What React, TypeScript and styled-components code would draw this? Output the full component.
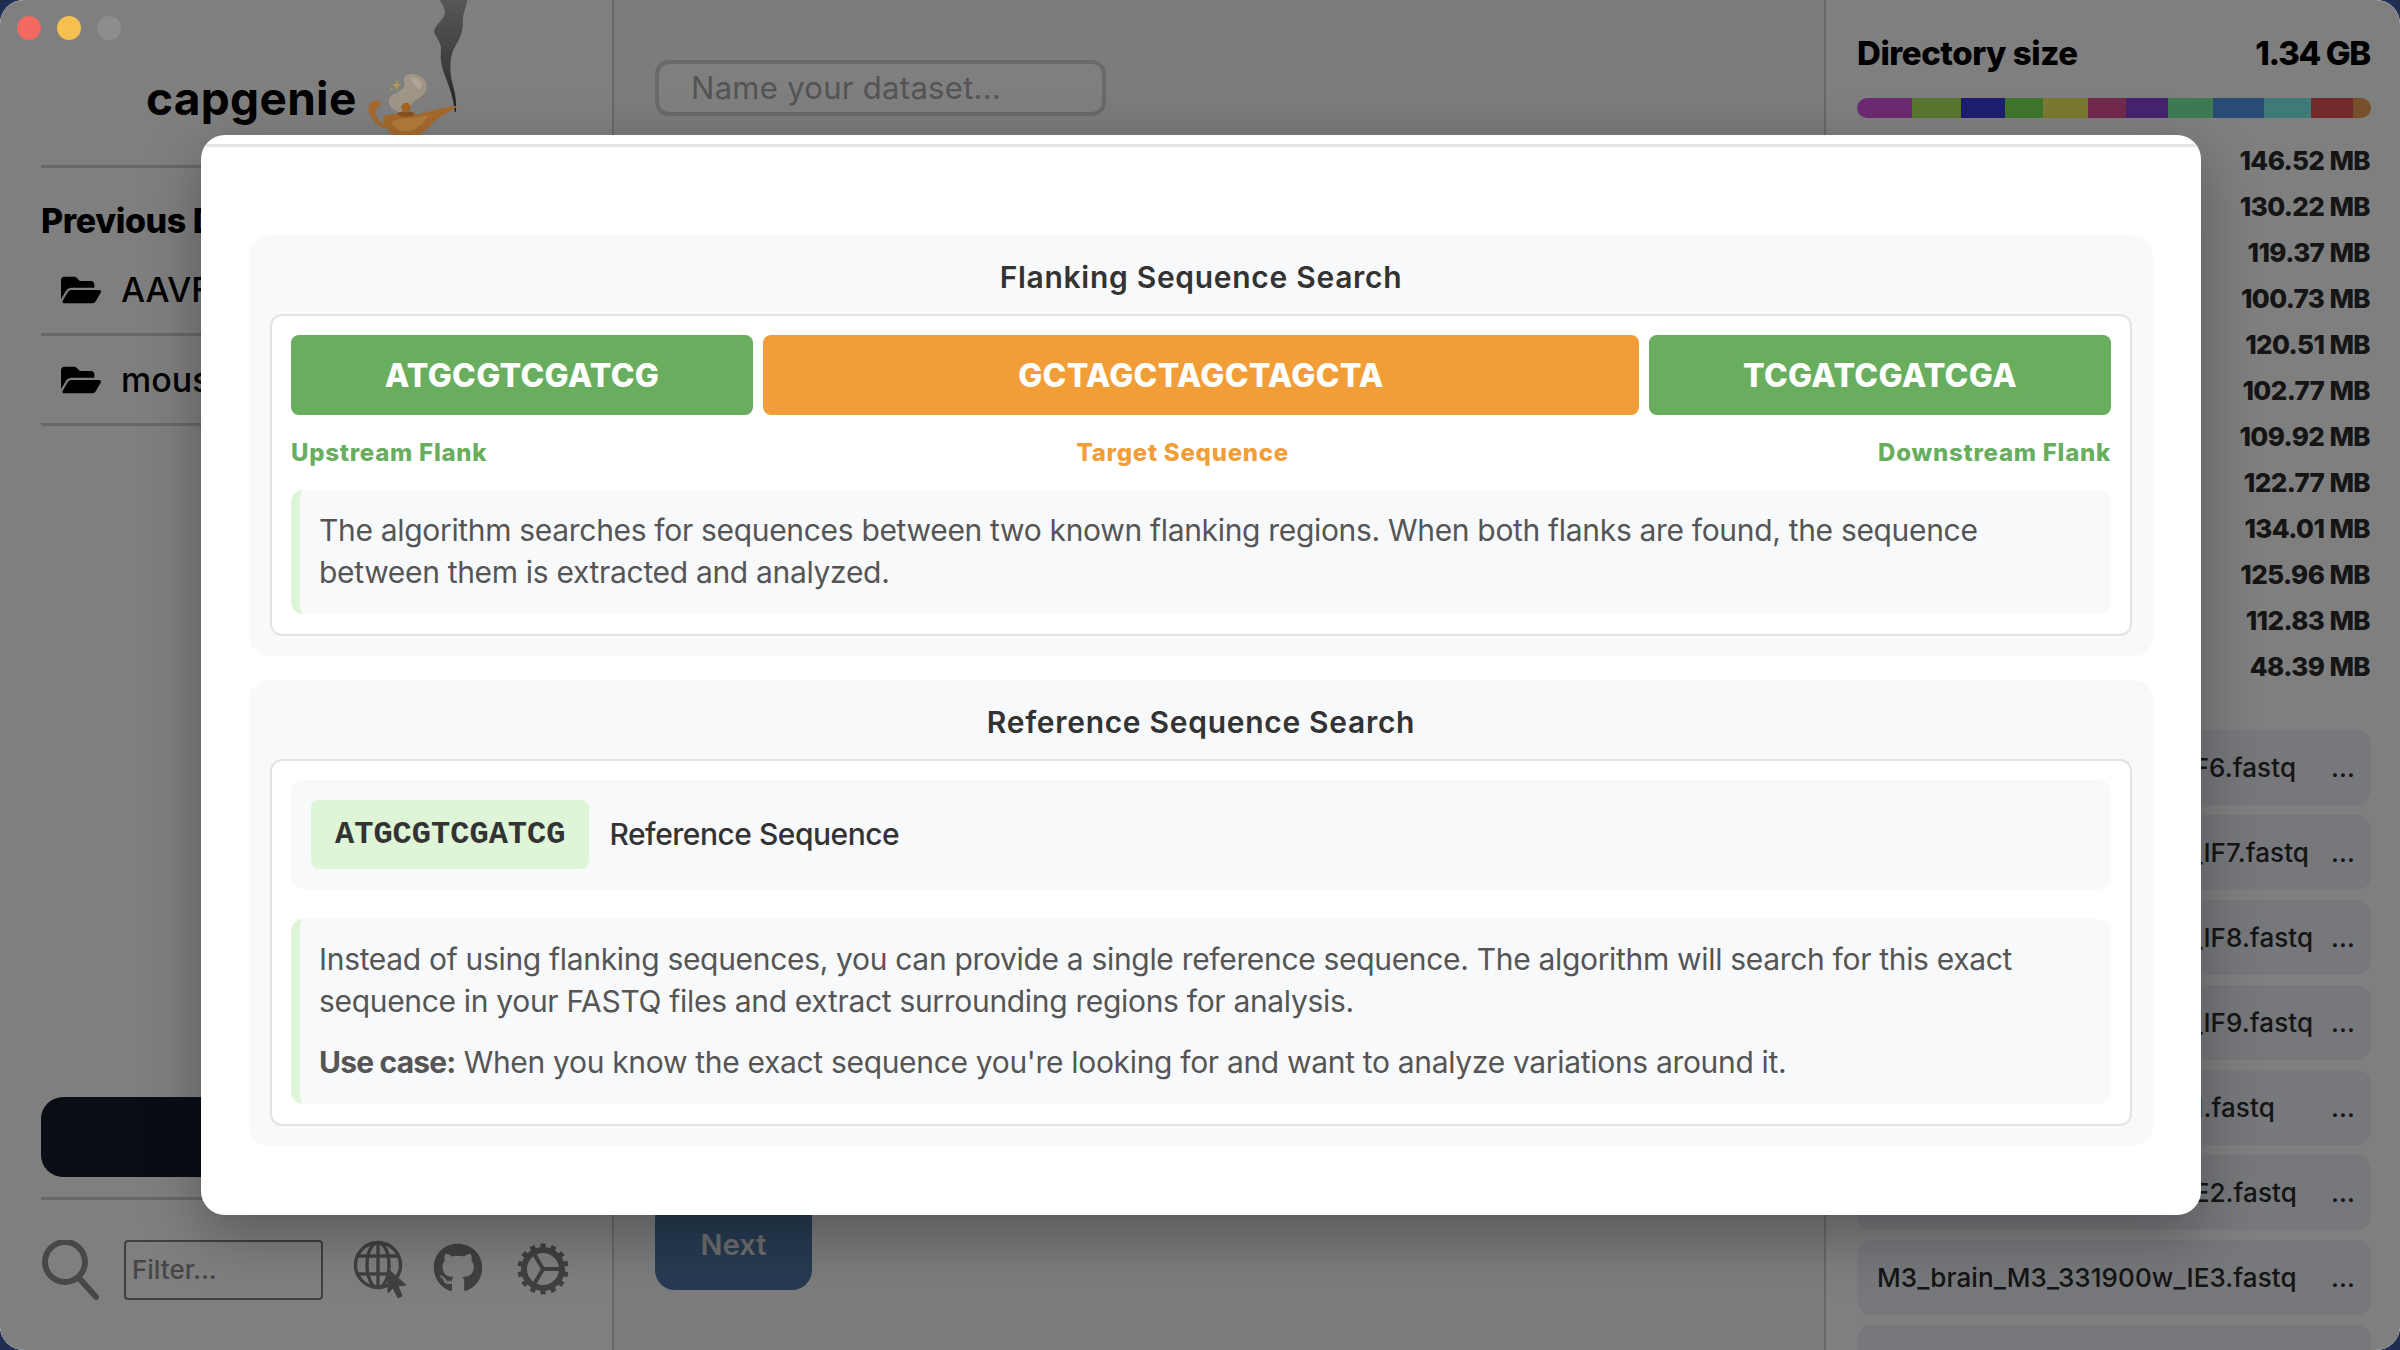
import React from 'react';
import styled, {createGlobalStyle} from 'styled-components';
import {FaFolderOpen, FaGithub} from 'react-icons/fa';

const FONT = `Inter, "Noto Sans", "Liberation Sans", sans-serif`;

const GlobalStyle = createGlobalStyle`
  html, body {
    margin: 0;
    padding: 0;
    background: #1f2e52;
  }

  * {
    box-sizing: border-box;
  }

  body {
    font-family: ${FONT};
  }
`;

const segments = [
    {color: '#dc54e6', width: 55},
    {color: '#b2f05e', width: 49},
    {color: '#3c3ce0', width: 44},
    {color: '#7cea58', width: 38},
    {color: '#f4f466', width: 45},
    {color: '#e4549a', width: 38},
    {color: '#8e46de', width: 42},
    {color: '#7ef4a4', width: 45},
    {color: '#5496ea', width: 51},
    {color: '#7cf4f4', width: 47},
    {color: '#e45454', width: 42},
    {color: '#eaa054', width: 18},
];

const sizes = ['146.52 MB', '130.22 MB', '119.37 MB', '100.73 MB', '120.51 MB', '102.77 MB', '109.92 MB', '122.77 MB', '134.01 MB', '125.96 MB', '112.83 MB', '48.39 MB'];

const files = [
    'M3_brain_M3_331900w_IF6.fastq',
    'M3_brain_M3_3319000w_IF7.fastq',
    'M3_brain_M3_3319000w_IF8.fastq',
    'M3_brain_M3_3319000w_IF9.fastq',
    'M3_brain_M3_33190w_IE1.fastq',
    'M3_brain_M3_331900w_IE2.fastq',
    'M3_brain_M3_331900w_IE3.fastq',
];

const LampLogo = () => (
    <LampSvg viewBox="0 0 420 405" width="140" height="135">
        <defs>
            <linearGradient id="smoke" x1="0" y1="0" x2="0" y2="1">
                <stop offset="0" stopColor="#565656"/>
                <stop offset="0.6" stopColor="#3d3d3d"/>
                <stop offset="1" stopColor="#1e1e1e"/>
            </linearGradient>
        </defs>
        <path fill="url(#smoke)"
              d="M270 0 C275 15 290 25 283 45 C275 65 250 80 253 95 C255 110 275 125 273 150 C270 180 275 205 290 240 C300 270 310 290 314 335 L318 335 C320 290 312 270 305 240 C298 200 300 165 315 140 C335 110 340 85 338 60 C340 40 350 15 352 0 Z"/>
        <path fill="#a09688"
              d="M170 225 C190 218 225 225 230 255 C232 285 205 295 190 305 C180 320 175 335 160 340 C130 335 110 315 118 295 C125 280 160 275 165 255 C160 240 160 230 170 225 Z"/>
        <path fill="#aea597" d="M185 232 C205 232 220 245 215 262 C205 275 195 255 185 245 Z"/>
        <path fill="#b89a4a" d="M140 240 L144 252 L155 255 L144 259 L140 270 L136 259 L125 255 L136 252 Z"/>
        <circle cx="125" cy="267" r="3" fill="#b89a4a"/>
        <path fill="#a56a2e"
              d="M62 310 C75 292 95 300 92 315 C85 322 75 325 78 345 C85 365 100 372 115 380 L105 385 C80 378 60 355 55 330 C55 320 58 314 62 310 Z"/>
        <path fill="#a56a2e"
              d="M100 350 C125 335 150 345 190 345 C225 340 270 322 322 317 C318 328 290 335 265 355 C240 378 225 395 210 405 L130 405 C115 395 100 375 100 350 Z"/>
        <path fill="#b47c3c" d="M125 365 C150 352 200 355 235 345 C225 370 195 395 165 395 C145 392 130 380 125 365 Z"/>
        <ellipse cx="168" cy="342" rx="26" ry="8" fill="#87521f"/>
        <circle cx="168" cy="322" r="14" fill="#a36526"/>
    </LampSvg>
);

const SearchIcon = () => (
    <svg viewBox="0 0 58 60" width="58" height="60" fill="none" stroke="#909090" strokeWidth="6" strokeLinecap="round">
        <circle cx="24" cy="22" r="20"/>
        <line x1="38" y1="38" x2="55" y2="57"/>
    </svg>
);

const GlobeIcon = () => (
    <svg viewBox="0 0 54 58" width="54" height="58" fill="none" stroke="#808080" strokeWidth="3.4">
        <circle cx="25" cy="25" r="22.5"/>
        <ellipse cx="25" cy="25" rx="11" ry="22.5"/>
        <line x1="25" y1="2" x2="25" y2="48"/>
        <line x1="4" y1="16" x2="46" y2="16"/>
        <line x1="4" y1="34" x2="34" y2="34"/>
        <path d="M35 29 L53 45 L45 46 L49 56 L45 58 L40 48 L35 53 Z" fill="#808080" stroke="#808080" strokeWidth="1"/>
    </svg>
);

const GearIcon = () => (
    <svg viewBox="0 0 52 52" width="52" height="52" fill="none" stroke="#808080">
        <circle cx="26" cy="26" r="19" strokeWidth="6"/>
        {Array.from({length: 14}).map((_, i) => (
            <rect key={i} x="23.4" y="0.5" width="5.2" height="6" fill="#808080" stroke="none"
                  transform={`rotate(${(360 / 14) * i} 26 26)`}/>
        ))}
        <path d="M26 26 L45 26 M26 26 L16 9 M26 26 L16 43" strokeWidth="4"/>
    </svg>
);

export default function App() {
    return (
        <Window>
            <GlobalStyle/>
            <TrafficLights>
                <Light $color="#f3685f"/>
                <Light $color="#f6c04f"/>
                <Light $color="#8d8d8d"/>
            </TrafficLights>

            <Sidebar>
                <LogoRow>
                    <LogoText>capgenie</LogoText>
                    <LampLogo/>
                </LogoRow>
                <SideHeading>Previous Datasets</SideHeading>
                <FolderRow><FaFolderOpen/><span>AAVF6</span></FolderRow>
                <FolderRow><FaFolderOpen/><span>mouse</span></FolderRow>
                <BottomGroup>
                    <DarkButton/>
                    <ToolRow>
                        <SearchIcon/>
                        <FilterBox>Filter...</FilterBox>
                        <GlobeIcon/>
                        <GithubWrap><FaGithub size={50}/></GithubWrap>
                        <GearWrap><GearIcon/></GearWrap>
                    </ToolRow>
                </BottomGroup>
            </Sidebar>

            <Main>
                <NameBox>Name your dataset...</NameBox>
                <NextButton>Next</NextButton>
            </Main>

            <RightPanel>
                <SizeHeader>
                    <span>Directory size</span>
                    <SizeTotal>1.34 GB</SizeTotal>
                </SizeHeader>
                <SizeBar>
                    {segments.map(s => <Segment key={s.color} $color={s.color} $width={s.width}/>)}
                </SizeBar>
                <SizeList>
                    {sizes.map(s => <SizeRow key={s}>{s}</SizeRow>)}
                </SizeList>
                <FileList>
                    {files.map(f => (
                        <FileRow key={f}>
                            <span>{f}</span>
                            <span>...</span>
                        </FileRow>
                    ))}
                    <FileRow/>
                </FileList>
            </RightPanel>

            <Overlay/>

            <ModalWrap>
                <Modal>
                    <ModalHeader/>
                    <ModalBody>
                        <Section>
                            <SectionTitle>Flanking Sequence Search</SectionTitle>
                            <Card>
                                <SeqBars>
                                    <SeqBar $color="#69ae5f">ATGCGTCGATCG</SeqBar>
                                    <SeqBar $color="#f29e38">GCTAGCTAGCTAGCTA</SeqBar>
                                    <SeqBar $color="#69ae5f">TCGATCGATCGA</SeqBar>
                                </SeqBars>
                                <SeqLabels>
                                    <SeqLabel $color="#69ae5f">Upstream Flank</SeqLabel>
                                    <SeqLabel $color="#f29e38">Target Sequence</SeqLabel>
                                    <SeqLabel $color="#69ae5f">Downstream Flank</SeqLabel>
                                </SeqLabels>
                                <Note>
                                    <p>The algorithm searches for sequences between two known flanking regions. When both flanks are found, the sequence<br/>between them is extracted and analyzed.</p>
                                </Note>
                            </Card>
                        </Section>

                        <Section>
                            <SectionTitle>Reference Sequence Search</SectionTitle>
                            <Card>
                                <RefRow>
                                    <RefPill>ATGCGTCGATCG</RefPill>
                                    <RefLabel>Reference Sequence</RefLabel>
                                </RefRow>
                                <RefNote>
                                    <p>Instead of using flanking sequences, you can provide a single reference sequence. The algorithm will search for this exact<br/>sequence in your FASTQ files and extract surrounding regions for analysis.</p>
                                    <p><strong>Use case:</strong> When you know the exact sequence you're looking for and want to analyze variations around it.</p>
                                </RefNote>
                            </Card>
                        </Section>
                    </ModalBody>
                </Modal>
            </ModalWrap>
        </Window>
    );
}

const Window = styled.div`
  position: relative;
  display: flex;
  width: 2400px;
  height: 1350px;
  overflow: hidden;
  border-radius: 24px;
  background: #fff;
`

const TrafficLights = styled.div`
  position: absolute;
  top: 16px;
  left: 17px;
  z-index: 6;
  display: flex;
  gap: 16px;
`

const Light = styled.div<{ $color: string }>`
  width: 24px;
  height: 24px;
  border-radius: 50%;
  background: ${props => props.$color};
`

const Sidebar = styled.aside`
  display: flex;
  flex-direction: column;
  flex: 0 0 614px;
  height: 100%;
  padding: 0 41px 50px;
  border-right: 2px solid #d0d0d0;
  background: #fff;
`

const LogoRow = styled.div`
  display: flex;
  align-items: flex-start;
  height: 168px;
  padding-left: 105px;
  border-bottom: 3px solid #d0d0d0;
`

const LogoText = styled.div`
  margin-top: 65px;
  font-size: 46px;
  line-height: 66px;
  font-weight: 700;
  letter-spacing: 0.3px;
  color: #000;
`

const LampSvg = styled.svg`
  position: relative;
  z-index: 6;
  flex: none;
  margin-left: -7px;
`

const SideHeading = styled.h2`
  margin: 27px 0 0;
  font-size: 34px;
  line-height: 51px;
  font-weight: 800;
  letter-spacing: -0.4px;
  white-space: nowrap;
  color: #000;
`

const FolderRow = styled.div`
  display: flex;
  align-items: center;
  gap: 20px;
  height: 90px;
  padding-left: 20px;
  border-bottom: 3px solid #d0d0d0;
  font-size: 34px;
  font-weight: 500;
  color: #000;

  svg {
    width: 40px;
    height: 36px;
  }
`

const BottomGroup = styled.div`
  margin-top: auto;
`

const DarkButton = styled.div`
  height: 80px;
  border-radius: 22px;
  background: #141a28;
`

const ToolRow = styled.div`
  display: flex;
  align-items: flex-start;
  gap: 25px;
  margin-top: 20px;
  padding-top: 40px;
  border-top: 3px solid #d0d0d0;
  color: #808080;
`

const FilterBox = styled.div`
  display: flex;
  align-items: center;
  flex: 0 0 199px;
  height: 60px;
  margin-right: 5px;
  padding: 0 0 2px 6px;
  border: 2.5px solid #808080;
  border-radius: 4px;
  font-size: 26px;
  font-weight: 500;
  color: #8c8c8c;
`

const GithubWrap = styled.div`
  height: 50px;
  margin: 3px 0 0 1px;
`

const GearWrap = styled.div`
  height: 52px;
  margin: 3px 0 0 9px;
`

const Main = styled.main`
  display: flex;
  flex-direction: column;
  flex: 0 0 1212px;
  height: 100%;
  padding: 60px 0 60px 41px;
  border-right: 2px solid #d0d0d0;
  background: #f8f9fb;
`

const NameBox = styled.div`
  display: flex;
  align-items: center;
  width: 451px;
  height: 56px;
  padding: 0 0 2px 32px;
  border: 4px solid #d4d4d4;
  border-radius: 14px;
  background: #fff;
  font-size: 31px;
  letter-spacing: 0.3px;
  color: #a8a8a8;
`

const NextButton = styled.div`
  display: flex;
  align-items: center;
  justify-content: center;
  width: 157px;
  height: 92px;
  margin-top: auto;
  border-radius: 20px;
  background: #4c76a4;
  font-size: 29px;
  font-weight: 600;
  color: #dcdcdc;
`

const RightPanel = styled.aside`
  flex: 1;
  min-width: 0;
  height: 100%;
  padding: 28px 29px 0 31px;
  background: #fff;
`

const SizeHeader = styled.div`
  display: flex;
  justify-content: space-between;
  font-size: 33px;
  line-height: 51px;
  font-weight: 800;
  letter-spacing: -0.45px;
  color: #000;
`

const SizeTotal = styled.span`
  padding-right: 1px;
  letter-spacing: -1.3px;
`

const SizeBar = styled.div`
  display: flex;
  height: 20px;
  margin-top: 19px;
  overflow: hidden;
  border-radius: 10px;
`

const Segment = styled.div<{ $color: string, $width: number }>`
  flex: 0 0 ${props => props.$width}px;
  background: ${props => props.$color};
`

const SizeList = styled.div`
  margin-top: 20px;
`

const SizeRow = styled.div`
  height: 46px;
  padding-right: 1px;
  font-size: 26px;
  line-height: 46px;
  font-weight: 800;
  letter-spacing: -0.6px;
  text-align: right;
  color: #2a2a2a;
`

const FileList = styled.div`
  display: flex;
  flex-direction: column;
  gap: 10px;
  margin-top: 40px;
`

const FileRow = styled.div`
  display: flex;
  align-items: center;
  justify-content: space-between;
  flex: none;
  height: 75px;
  padding: 0 16px 0 20px;
  border-radius: 14px;
  background: #ecf0f6;
  font-size: 26px;
  font-weight: 500;
  letter-spacing: 0.1px;
  color: #2a2a2a;
`

const Overlay = styled.div`
  position: absolute;
  inset: 0;
  z-index: 5;
  background: rgba(0, 0, 0, 0.5);
`

const ModalWrap = styled.div`
  position: absolute;
  inset: 0;
  z-index: 7;
  display: flex;
  align-items: center;
  justify-content: center;
  padding-left: 2px;
`

const Modal = styled.div`
  width: 2000px;
  height: 1080px;
  overflow: hidden;
  border-radius: 24px;
  background: #fff;
  box-shadow: 0 20px 60px rgba(0, 0, 0, 0.3);
`

const ModalHeader = styled.div`
  height: 12px;
  border-bottom: 3px solid #e3e4e6;
`

const ModalBody = styled.div`
  display: flex;
  flex-direction: column;
  gap: 24px;
  padding: 88px 48px 0;
`

const Section = styled.section`
  padding: 20px 21px;
  border-radius: 20px;
  background: #f8f9fb;
`

const SectionTitle = styled.h3`
  margin: 0 0 14px;
  font-size: 30px;
  line-height: 45px;
  font-weight: 600;
  letter-spacing: 0.7px;
  text-align: center;
  color: #333;
`

const Card = styled.div`
  padding: 19px 19px 20px;
  border: 2px solid #e2e3e5;
  border-radius: 12px;
  background: #fff;
`

const SeqBars = styled.div`
  display: grid;
  grid-template-columns: 462px 1fr 462px;
  gap: 10px;
`

const SeqBar = styled.div<{ $color: string }>`
  display: flex;
  align-items: center;
  justify-content: center;
  height: 80px;
  border-radius: 8px;
  background: ${props => props.$color};
  font-size: 32px;
  font-weight: 800;
  letter-spacing: 0.3px;
  color: #fff;
`

const SeqLabels = styled.div`
  display: flex;
  justify-content: space-between;
  margin: 19px 0 19px;
`

const SeqLabel = styled.span<{ $color: string }>`
  font-size: 24px;
  line-height: 37px;
  font-weight: 800;
  letter-spacing: 0.75px;
  color: ${props => props.$color};
`

const Note = styled.div`
  padding: 20px 18px;
  border-left: 9px solid #dff5d8;
  border-radius: 12px;
  background: #f8f9fb;
  font-size: 30px;
  line-height: 42px;
  letter-spacing: -0.32px;
  color: #555;

  p {
    margin: 0 0 0 1px;
    white-space: nowrap;
    transform: translateY(-1px);
  }

  p + p {
    margin-top: 19px;
  }

  strong {
    font-weight: 700;
    letter-spacing: -0.8px;
  }
`

const RefNote = styled(Note)`
  margin-top: 30px;
`

const RefRow = styled.div`
  display: flex;
  align-items: center;
  gap: 20px;
  padding: 20px;
  border-radius: 12px;
  background: #f8f9fb;
`

const RefPill = styled.div`
  display: flex;
  align-items: center;
  height: 69px;
  padding: 0 24px;
  border-radius: 8px;
  background: #dff5d8;
  font-family: "Liberation Mono", "DejaVu Sans Mono", monospace;
  font-size: 32px;
  font-weight: 700;
  color: #333;
`

const RefLabel = styled.span`
  font-size: 30px;
  font-weight: 500;
  letter-spacing: -0.5px;
  color: #333;
  transform: translateY(-1px);
`
